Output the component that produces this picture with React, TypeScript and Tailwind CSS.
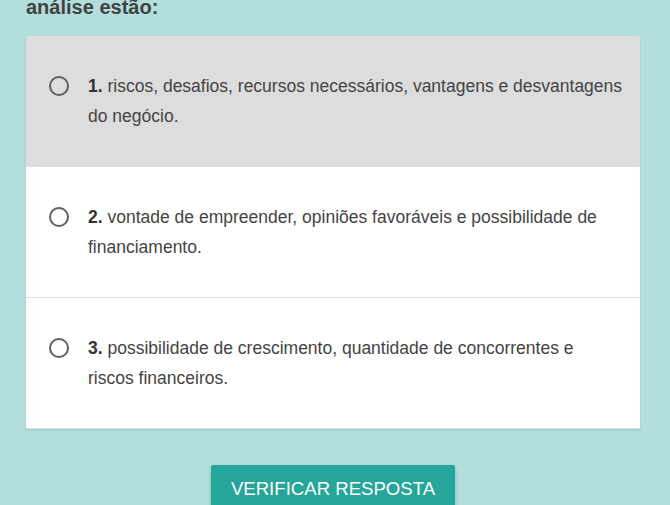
import React from 'react';

interface Option {
  num: string;
  text: string;
}

const options: Option[] = [
  { num: '1.', text: 'riscos, desafios, recursos necessários, vantagens e desvantagens do negócio.' },
  { num: '2.', text: 'vontade de empreender, opiniões favoráveis e possibilidade de financiamento.' },
  { num: '3.', text: 'possibilidade de crescimento, quantidade de concorrentes e riscos financeiros.' }
];

const App: React.FC = () => {
  const selected = 0;

  return (
    <div
      className="min-h-[505px] bg-[#b2dfdb] pl-[26px] pr-[30px] overflow-hidden"
      style={{ fontFamily: '"Liberation Sans", Arial, sans-serif' }}
    >
      <h2 className="-mt-[8px] text-[20px] leading-[30px] font-bold text-[#424242]">análise estão:</h2>

      <div className="mt-[14px] bg-white shadow-[0_1px_2px_rgba(0,0,0,0.12)]">
        {options.map((opt, i) => (
          <label
            key={opt.num}
            className={`flex items-start pl-[23px] pr-[17px] py-[35px] border-b border-[#e0e0e0] ${
              i === selected ? 'bg-[#dddddd]' : 'bg-white'
            }`}
          >
            <span className="mt-[5px] shrink-0 w-[20px] h-[20px] rounded-full border-2 border-[#5f5f5f]" />
            <span className="ml-[19px] text-[17.5px] leading-[30px] text-[#444444]">
              <b className="font-bold text-[#333333]">{opt.num}</b> {opt.text}
            </span>
          </label>
        ))}
      </div>

      <div className="flex justify-center mt-[36px]">
        <button className="h-[48px] px-[20px] bg-[#26a69a] text-white text-[18.6px] uppercase rounded-[2px] shadow-[0_2px_4px_rgba(0,0,0,0.2)]">
          Verificar resposta
        </button>
      </div>
    </div>
  );
};

export default App;
